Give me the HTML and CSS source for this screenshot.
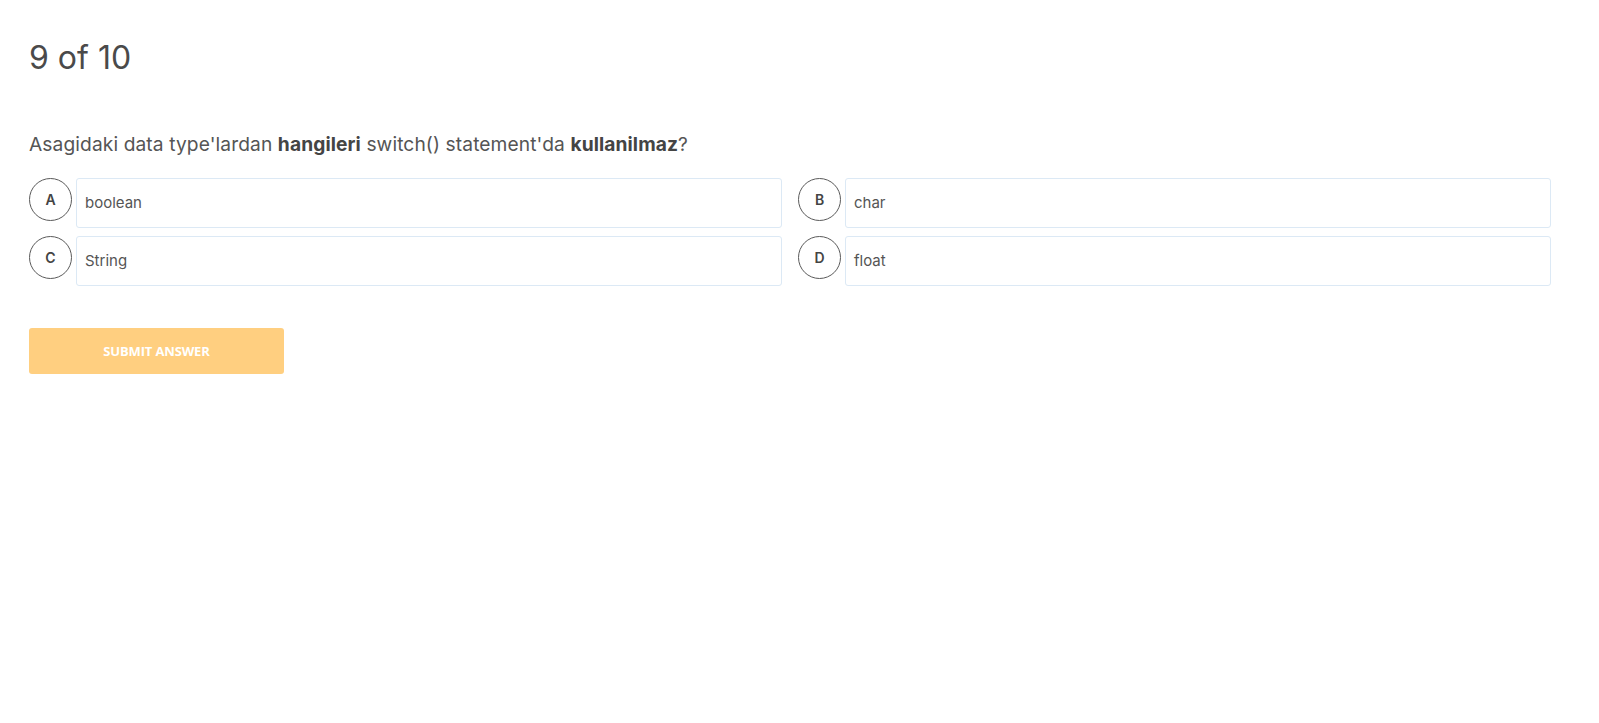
FILE: index.html
```html
<!DOCTYPE html>
<html lang="tr">
<head>
<meta charset="utf-8">
<title>Quiz</title>
<link rel="stylesheet" href="styles.css">
</head>
<body>
<main class="quiz">
  <h1 class="quiz-progress">9 of 10</h1>
  <p class="quiz-question">Asagidaki data type'lardan <strong>hangileri</strong> switch() statement'da <strong>kullanilmaz</strong>?</p>
  <div class="options">
    <div class="option">
      <span class="option-letter">A</span>
      <div class="option-box">boolean</div>
    </div>
    <div class="option">
      <span class="option-letter">B</span>
      <div class="option-box">char</div>
    </div>
    <div class="option">
      <span class="option-letter">C</span>
      <div class="option-box">String</div>
    </div>
    <div class="option">
      <span class="option-letter">D</span>
      <div class="option-box">float</div>
    </div>
  </div>
  <button class="submit-btn" type="button">SUBMIT ANSWER</button>
</main>
</body>
</html>
```

FILE: styles.css
```css
* { box-sizing: border-box; }

html, body {
  margin: 0;
  padding: 0;
  background: #ffffff;
}

body {
  font-family: Inter, "Noto Sans", sans-serif;
  color: #555555;
}

.quiz {
  padding: 38px 48px 0 29px;
}

.quiz-progress {
  margin: 0;
  font-size: 32px;
  line-height: 40px;
  font-weight: 400;
  color: #4a4a4a;
}

.quiz-question {
  margin: 54px 0 0 0;
  font-size: 19.2px;
  letter-spacing: 0.1px;
  line-height: 24px;
  color: #555555;
}

.quiz-question strong {
  font-weight: 700;
  color: #444;
}

.options {
  margin-top: 22px;
  display: grid;
  grid-template-columns: 1fr 1fr;
  column-gap: 16px;
  row-gap: 8px;
}

.option {
  display: flex;
  align-items: flex-start;
  gap: 4px;
}

.option-letter {
  flex: 0 0 43px;
  width: 43px;
  height: 43px;
  border: 1px solid #5a5a5a;
  border-radius: 50%;
  display: flex;
  align-items: center;
  justify-content: center;
  font-size: 14px;
  font-weight: 600;
  color: #444;
  padding-bottom: 1px;
}

.option-box {
  flex: 1;
  height: 50px;
  border: 1px solid #dce9f5;
  border-radius: 3px;
  padding: 0 0 1px 8px;
  display: flex;
  align-items: center;
  font-size: 15px;
  color: #555555;
}

.submit-btn {
  display: block;
  margin-top: 42px;
  width: 255px;
  height: 46px;
  border: none;
  border-radius: 3px;
  background: #ffcf80;
  color: #ffffff;
  font-family: "Open Sans", sans-serif;
  font-weight: 700;
  font-size: 13px;
  letter-spacing: -0.15px;
  padding: 0;
}
```
